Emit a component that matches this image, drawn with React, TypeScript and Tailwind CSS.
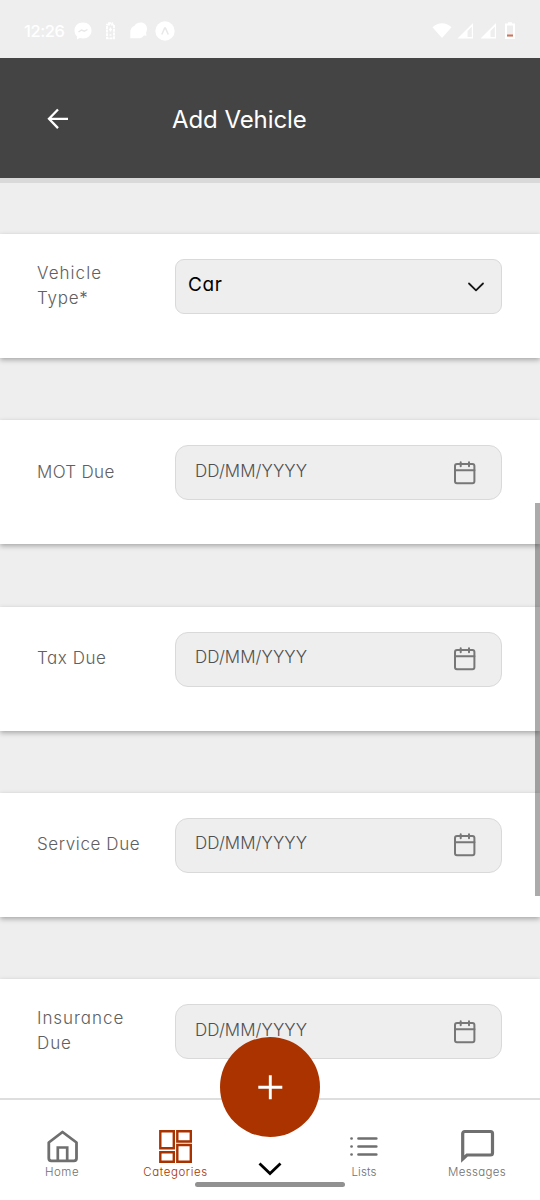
import React from "react";

function StatusBar() {
  return (
    <div className="flex h-[58px] shrink-0 items-center justify-between bg-[#eeeeee] pt-1 pl-[24px] pr-[24px] text-white">
      <div className="flex items-center">
        <span className="w-[50px] text-[16.5px] font-medium tracking-[-0.4px]">12:26</span>
        <svg className="h-[18px] w-[18px]" viewBox="0 0 18 18">
          <path fill="#fff" d="M9 .5C4 .5.5 4 .5 8.500c0 2.500 1 4.600 2.500 6V17.500l2.700-1.400c1 .3 2.100.4 3.300.4 5 0 8.500-3.500 8.500-8S14 .5 9 .5Z" />
          <path d="m4.500 10 3-2 2.800 1.200L13.500 7.500" fill="none" stroke="#e8e8e8" strokeWidth="1.400" />
        </svg>
        <svg className="ml-[13px] h-[18px] w-[11px]" viewBox="0 0 11 18">
          <path d="M4 2.200V1.200h3v1M2 2.700h7v13.600H2Z" fill="none" stroke="#fff" strokeWidth="1.800" strokeDasharray="3 .7" />
          <path d="M5.500 5.500v4M4 7.500h3M4.500 13h2" stroke="#fff" strokeWidth="1.300" />
        </svg>
        <svg className="ml-[13px] h-[18px] w-[19px]" viewBox="0 0 19 18">
          <path fill="#fff" d="M11.500.5c3.800 0 6.500 2.500 6.500 6 0 2-.5 3.300-1 4.300l.5 3-2.500-.3c-1.500 2-3.500 2.800-6 2.800H1.300V10c0-3 1.500-5.300 4-6C6.500 1.800 8.700.5 11.500.5Z" />
        </svg>
        <svg className="ml-[7px] h-[20px] w-[20px]" viewBox="0 0 20 20">
          <circle cx="10" cy="10" r="9.700" fill="#fff" />
          <path d="M6.800 13.500 9.700 7h.7l2.900 6.500" fill="none" stroke="#e8e8e8" strokeWidth="1.500" />
        </svg>
      </div>
      <svg className="h-[18px] w-[84px]" viewBox="0 0 84 18">
        <path fill="#fff" d="M.5 5.200C6.300-.2 13.700-.2 19.500 5.200L10 16Z" />
        <path fill="#fff" fillRule="evenodd" d="M25.500 16.500 41 1V16.500ZM35.500 9v6h4.300V4.800Z" />
        <path fill="#fff" fillRule="evenodd" d="M48.500 16.500 64 1V16.500ZM58.500 9v6h4.300V4.800Z" />
        <path d="M74 2.500h8V16h-8ZM76 1.200h4" fill="none" stroke="#fff" strokeWidth="2" />
        <path fill="#d4735a" d="M75 12.500h6v2h-6z" />
      </svg>
    </div>
  );
}

function CalendarIcon() {
  return (
    <svg className="h-[26px] w-[24px]" viewBox="0 0 24 26" fill="none" stroke="#777" strokeWidth="2" strokeLinecap="round">
      <rect x="2" y="4" width="19.400" height="19.200" rx="2" />
      <path d="M2 10.200h19.400M7.700 2.200v4M16 2.200v4" />
    </svg>
  );
}

function Field({ label, value }: { label: React.ReactNode; value?: string }) {
  return (
    <div className="mb-[62.300px] flex h-[124px] shrink-0 bg-white pl-[37px] shadow-[0_2px_5px_rgba(0,0,0,0.3)]">
      <div className="flex h-[78px] w-[138px] items-center pt-[25px] text-[17px] leading-[24.500px] text-[#606060]">
        <div>{label}</div>
      </div>
      <div className={value ? "mt-[25px] flex h-[55px] w-[327px] items-center justify-between rounded-[9px] border border-[#d9d9d9] bg-[#eeeeee] pl-[12px] pr-[16px]" : "mt-[25px] flex h-[55px] w-[327px] items-center justify-between rounded-[13px] border border-[#d9d9d9] bg-[#eeeeee] pl-[19px] pr-[24px]"}>
        {value ? (
          <>
            <span className="mb-[3px] text-[19px] font-normal leading-6 tracking-[0.650px] text-black">{value}</span>
            <svg className="h-[10px] w-[18px]" viewBox="0 0 18 10">
              <path d="m2 1.500 7 6.800 7-6.800" fill="none" stroke="#161616" strokeWidth="1.800" strokeLinecap="round" strokeLinejoin="round" />
            </svg>
          </>
        ) : (
          <>
            <span className="mb-[4px] text-[17px] leading-6 tracking-[0.050px] text-[#505050]">DD/MM/YYYY</span>
            <CalendarIcon />
          </>
        )}
      </div>
    </div>
  );
}

function NavItem({ label, active, children }: { label: React.ReactNode; active?: boolean; children: React.ReactNode }) {
  return (
    <div className={active ? "flex w-[113px] flex-col items-center text-[#a83200]" : "flex w-[113px] flex-col items-center text-[#6f6f6f]"}>
      <svg className="h-[36px] w-[36px]" viewBox="0 0 36 36" fill="none" stroke="currentColor">
        {children}
      </svg>
      <span className="mt-[1px] text-[11.500px] leading-[14px]">{label}</span>
    </div>
  );
}

function BottomNav() {
  return (
    <nav className="relative z-10 flex h-[102px] shrink-0 border-t-2 border-[#dedede] bg-white pt-[28px]">
      <div className="flex w-full pl-[5px]">
        <NavItem label={<span className="ml-[1px] tracking-[0.550px]">Home</span>}>
          <path d="M4.800 14.500 18.500 4l14 10.500v15.800a2.500 2.500 0 0 1-2.500 2.500H7.300a2.500 2.500 0 0 1-2.500-2.500Z" strokeWidth="2.800" strokeLinejoin="round" />
          <path d="M13.800 32V19.500h9.400V32" strokeWidth="2.700" />
        </NavItem>
        <NavItem label={<span className="ml-[2px] tracking-[0.600px]">Categories</span>} active>
          <path d="M3.300 3.200h13.500v17H3.300ZM20.300 3.200h13.500v10.300H20.300ZM3.300 24.200h13.500v9.500H3.300ZM20.300 17h13.500v16.700H20.300Z" strokeWidth="2.400" />
        </NavItem>
        <div className="w-[76px]" />
        <NavItem label={<span className="ml-[1px] tracking-[0.150px]">Lists</span>}>
          <path d="M12.500 10.500h17.800M12.500 18.500h17.800M12.500 26.500h17.800" strokeWidth="2.700" strokeLinecap="round" />
          <path d="M5.500 10.500h.1M5.500 18.500h.1M5.500 26.500h.1" strokeWidth="2.700" strokeLinecap="round" />
        </NavItem>
        <NavItem label={<span className="ml-[1px] tracking-[0.350px]">Messages</span>}>
          <path d="M3.700 31V5.500a2 2 0 0 1 2-2H31.500a2 2 0 0 1 2 2V25a2 2 0 0 1-2 2H8Z" strokeWidth="3.200" />
        </NavItem>
      </div>
      <div className="absolute left-[220px] top-[-63px] flex h-[100px] w-[100px] items-center justify-center rounded-full bg-[#ab3300]">
        <svg className="h-[26px] w-[26px]" viewBox="0 0 26 26">
          <path d="M13.300 1.300v24M1.300 13.300h24" stroke="#fff" strokeWidth="2.900" />
        </svg>
      </div>
      <svg className="absolute left-[258px] top-[61px] h-[15px] w-[24px]" viewBox="0 0 24 15">
        <path d="m1.500 2.500 10.500 10 10.500-10" fill="none" stroke="#000" strokeWidth="2.800" />
      </svg>
      <div className="absolute left-[195px] top-[82px] h-[5px] w-[150px] rounded-full bg-[#919191]" />
    </nav>
  );
}

export default function App() {
  return (
    <div className="relative flex h-[1200px] w-[540px] flex-col overflow-hidden bg-[#eeeeee] font-['Inter',sans-serif] font-light [font-feature-settings:'cv11']">
      <StatusBar />
      <header className="flex h-[125px] shrink-0 items-center border-b-[5px] border-[#d9d9d9] bg-[#444444] pl-[47px] pt-[2px] text-white">
        <svg className="h-[22px] w-[22px]" viewBox="0 0 22 22">
          <path d="M21 10.800H2.500M11 1.500 2 10.800l9 9.300" fill="none" stroke="#fff" strokeWidth="2.300" />
        </svg>
        <h1 className="ml-[103px] mt-[2px] text-[24px] font-normal leading-8 tracking-[-0.080px]">Add Vehicle</h1>
      </header>
      <main className="flex min-h-0 grow flex-col overflow-hidden pt-[51px]">
        <Field label={<><span className="tracking-[1.050px]">Vehicle</span><br /><span className="tracking-[0.750px]">Type*</span></>} value="Car" />
        <Field label={<span className="tracking-[0.330px]">MOT Due</span>} />
        <Field label={<span className="tracking-[0.530px]">Tax Due</span>} />
        <Field label={<span className="tracking-[0.600px]">Service Due</span>} />
        <Field label={<><span className="tracking-[0.950px]">Insurance</span><br /><span className="tracking-[0.900px]">Due</span></>} />
      </main>
      <div className="absolute right-0 top-[503px] h-[393px] w-[5px] bg-black/[0.330]" />
      <BottomNav />
    </div>
  );
}
